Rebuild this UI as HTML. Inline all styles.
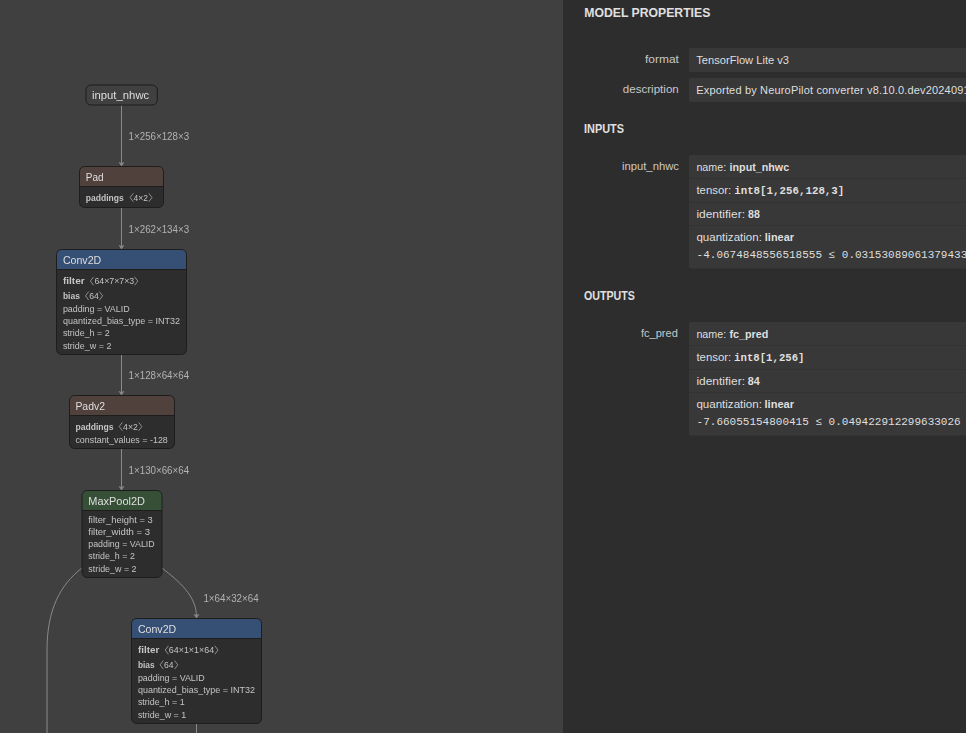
<!DOCTYPE html>
<html><head><meta charset="utf-8">
<style>
html,body{margin:0;padding:0;}
body{width:966px;height:733px;overflow:hidden;background:#404040;position:relative;font-family:"Liberation Sans",sans-serif;}
svg{position:absolute;left:0;top:0;}
svg.g{will-change:transform;}
.st{font-size:12px;font-weight:bold;fill:#e0e0e0;}
.sl{font-size:11px;fill:#c8c8c8;}
.sv{font-size:11px;fill:#dfdfdf;}
.nt{font-size:11px;fill:#dfdfdf;}
.at{font-size:9.5px;fill:#c4c4c4;}
.b{font-weight:bold;}
.el{font-size:10px;fill:#b2b2b2;}
.ep{stroke:#8a8a8a;stroke-width:1;fill:none;}
.ah{fill:#8a8a8a;stroke:#8a8a8a;stroke-width:0.7;stroke-linejoin:round;}
.br{fill:none;stroke:#b8b8b8;stroke-width:0.7;}
.mono{font-family:"Liberation Mono",monospace;}
</style></head>
<body>
<svg class="g" width="563" height="733" viewBox="0 0 563 733">
<path class="ep" d="M121.5 105.5 L121.5 164"/>
<path class="ah" d="M119.2 162.4 L121.5 166 L123.8 162.4 L121.5 163.6 Z"/>
<text class="el" x="128.6" y="140" textLength="60.5" lengthAdjust="spacingAndGlyphs">1×256×128×3</text>
<path class="ep" d="M121.5 208 L121.5 247"/>
<path class="ah" d="M119.2 245.4 L121.5 249 L123.8 245.4 L121.5 246.6 Z"/>
<text class="el" x="128.6" y="233" textLength="60.5" lengthAdjust="spacingAndGlyphs">1×262×134×3</text>
<path class="ep" d="M121.5 355 L121.5 393"/>
<path class="ah" d="M119.2 391.4 L121.5 395 L123.8 391.4 L121.5 392.6 Z"/>
<text class="el" x="128.6" y="379" textLength="60.5" lengthAdjust="spacingAndGlyphs">1×128×64×64</text>
<path class="ep" d="M121.5 449 L121.5 488"/>
<path class="ah" d="M119.2 486.4 L121.5 490 L123.8 486.4 L121.5 487.6 Z"/>
<text class="el" x="128.6" y="474" textLength="60.5" lengthAdjust="spacingAndGlyphs">1×130×66×64</text>
<path class="ep" d="M162 568 C180 582 196 596 196.5 616"/>
<path class="ah" d="M194.2 614.4 L196.5 618 L198.8 614.4 L196.5 615.6 Z"/>
<text class="el" x="203.4" y="602" textLength="55.2" lengthAdjust="spacingAndGlyphs">1×64×32×64</text>
<path class="ep" d="M82 568 C60 585 47 610 47 650 L47 740"/>
<path class="ep" d="M196.5 724 L196.5 740"/>
<rect x="86" y="85" width="71.3" height="20" rx="5" fill="#404040" stroke="#1d1d1d"/>
<text class="nt" x="92" y="99" textLength="57.2" lengthAdjust="spacingAndGlyphs">input_nhwc</text>
<path d="M84.5 166.5 H158.5 A5 5 0 0 1 163.5 171.5 V186.5 H79.5 V171.5 A5 5 0 0 1 84.5 166.5 Z" fill="#50413d"/>
<path d="M79.5 186.5 H163.5 V202.5 A5 5 0 0 1 158.5 207.5 H84.5 A5 5 0 0 1 79.5 202.5 Z" fill="#2d2d2d"/>
<line x1="79.5" y1="186.5" x2="163.5" y2="186.5" stroke="#1d1d1d" stroke-width="1"/>
<rect x="79.5" y="166.5" width="84.0" height="41.0" rx="5" fill="none" stroke="#1d1d1d"/>
<text class="nt" x="85.8" y="181" textLength="17.8" lengthAdjust="spacingAndGlyphs">Pad</text>
<text class="at b" x="85.8" y="200.5" textLength="37.9" lengthAdjust="spacingAndGlyphs">paddings</text>
<path class="br" d="M133.30 193.30 L130.10 197.55 L133.30 201.80"/>
<text class="at" x="133.6" y="200.5" textLength="14.4" lengthAdjust="spacingAndGlyphs">4×2</text>
<path class="br" d="M148.80 193.30 L152.00 197.55 L148.80 201.80"/>
<path d="M61.5 249.5 H181.5 A5 5 0 0 1 186.5 254.5 V269.5 H56.5 V254.5 A5 5 0 0 1 61.5 249.5 Z" fill="#364f74"/>
<path d="M56.5 269.5 H186.5 V349.5 A5 5 0 0 1 181.5 354.5 H61.5 A5 5 0 0 1 56.5 349.5 Z" fill="#2d2d2d"/>
<line x1="56.5" y1="269.5" x2="186.5" y2="269.5" stroke="#1d1d1d" stroke-width="1"/>
<rect x="56.5" y="249.5" width="130.0" height="105.0" rx="5" fill="none" stroke="#1d1d1d"/>
<text class="nt" x="62.9" y="264" textLength="38.3" lengthAdjust="spacingAndGlyphs">Conv2D</text>
<text class="at b" x="62.9" y="284" textLength="21.9" lengthAdjust="spacingAndGlyphs">filter</text>
<path class="br" d="M93.60 276.80 L90.40 281.05 L93.60 285.30"/>
<text class="at" x="94.4" y="284" textLength="39.8" lengthAdjust="spacingAndGlyphs">64×7×7×3</text>
<path class="br" d="M134.60 276.80 L137.80 281.05 L134.60 285.30"/>
<text class="at b" x="62.9" y="298.8" textLength="17.0" lengthAdjust="spacingAndGlyphs">bias</text>
<path class="br" d="M88.70 291.60 L85.50 295.85 L88.70 300.10"/>
<text class="at" x="89.2" y="298.8" textLength="9.6" lengthAdjust="spacingAndGlyphs">64</text>
<path class="br" d="M99.40 291.60 L102.60 295.85 L99.40 300.10"/>
<text class="at" x="62.9" y="312" textLength="66.7" lengthAdjust="spacingAndGlyphs">padding = VALID</text>
<text class="at" x="62.9" y="324" textLength="117.2" lengthAdjust="spacingAndGlyphs">quantized_bias_type = INT32</text>
<text class="at" x="62.9" y="336" textLength="46.8" lengthAdjust="spacingAndGlyphs">stride_h = 2</text>
<text class="at" x="62.9" y="348.5" textLength="48.6" lengthAdjust="spacingAndGlyphs">stride_w = 2</text>
<path d="M74.5 395.5 H169.5 A5 5 0 0 1 174.5 400.5 V415.5 H69.5 V400.5 A5 5 0 0 1 74.5 395.5 Z" fill="#50413d"/>
<path d="M69.5 415.5 H174.5 V443.5 A5 5 0 0 1 169.5 448.5 H74.5 A5 5 0 0 1 69.5 443.5 Z" fill="#2d2d2d"/>
<line x1="69.5" y1="415.5" x2="174.5" y2="415.5" stroke="#1d1d1d" stroke-width="1"/>
<rect x="69.5" y="395.5" width="105.0" height="53.0" rx="5" fill="none" stroke="#1d1d1d"/>
<text class="nt" x="75.4" y="410" textLength="29.6" lengthAdjust="spacingAndGlyphs">Padv2</text>
<text class="at b" x="75.4" y="429.5" textLength="38.2" lengthAdjust="spacingAndGlyphs">paddings</text>
<path class="br" d="M122.40 422.30 L119.20 426.55 L122.40 430.80"/>
<text class="at" x="123.1" y="429.5" textLength="14.7" lengthAdjust="spacingAndGlyphs">4×2</text>
<path class="br" d="M138.60 422.30 L141.80 426.55 L138.60 430.80"/>
<text class="at" x="75.4" y="443" textLength="92.4" lengthAdjust="spacingAndGlyphs">constant_values = -128</text>
<path d="M87 490.5 H157 A5 5 0 0 1 162 495.5 V510.5 H82 V495.5 A5 5 0 0 1 87 490.5 Z" fill="#365037"/>
<path d="M82 510.5 H162 V572.5 A5 5 0 0 1 157 577.5 H87 A5 5 0 0 1 82 572.5 Z" fill="#2d2d2d"/>
<line x1="82" y1="510.5" x2="162" y2="510.5" stroke="#1d1d1d" stroke-width="1"/>
<rect x="82" y="490.5" width="80" height="87.0" rx="5" fill="none" stroke="#1d1d1d"/>
<text class="nt" x="88.25" y="505" textLength="56.7" lengthAdjust="spacingAndGlyphs">MaxPool2D</text>
<text class="at" x="88.25" y="523" textLength="64.5" lengthAdjust="spacingAndGlyphs">filter_height = 3</text>
<text class="at" x="88.25" y="535" textLength="61.8" lengthAdjust="spacingAndGlyphs">filter_width = 3</text>
<text class="at" x="88.25" y="547" textLength="66.4" lengthAdjust="spacingAndGlyphs">padding = VALID</text>
<text class="at" x="88.25" y="559" textLength="46.6" lengthAdjust="spacingAndGlyphs">stride_h = 2</text>
<text class="at" x="88.25" y="571.5" textLength="48.3" lengthAdjust="spacingAndGlyphs">stride_w = 2</text>
<path d="M136.5 618.5 H256.5 A5 5 0 0 1 261.5 623.5 V638.5 H131.5 V623.5 A5 5 0 0 1 136.5 618.5 Z" fill="#364f74"/>
<path d="M131.5 638.5 H261.5 V718.5 A5 5 0 0 1 256.5 723.5 H136.5 A5 5 0 0 1 131.5 718.5 Z" fill="#2d2d2d"/>
<line x1="131.5" y1="638.5" x2="261.5" y2="638.5" stroke="#1d1d1d" stroke-width="1"/>
<rect x="131.5" y="618.5" width="130.0" height="105.0" rx="5" fill="none" stroke="#1d1d1d"/>
<text class="nt" x="137.9" y="633" textLength="38.3" lengthAdjust="spacingAndGlyphs">Conv2D</text>
<text class="at b" x="137.9" y="653" textLength="21.4" lengthAdjust="spacingAndGlyphs">filter</text>
<path class="br" d="M168.40 645.80 L165.20 650.05 L168.40 654.30"/>
<text class="at" x="168.8" y="653" textLength="45.3" lengthAdjust="spacingAndGlyphs">64×1×1×64</text>
<path class="br" d="M214.80 645.80 L218.00 650.05 L214.80 654.30"/>
<text class="at b" x="137.9" y="667.8" textLength="16.7" lengthAdjust="spacingAndGlyphs">bias</text>
<path class="br" d="M163.30 660.60 L160.10 664.85 L163.30 669.10"/>
<text class="at" x="164.0" y="667.8" textLength="9.5" lengthAdjust="spacingAndGlyphs">64</text>
<path class="br" d="M174.60 660.60 L177.80 664.85 L174.60 669.10"/>
<text class="at" x="137.9" y="681" textLength="66.8" lengthAdjust="spacingAndGlyphs">padding = VALID</text>
<text class="at" x="137.9" y="693" textLength="117.1" lengthAdjust="spacingAndGlyphs">quantized_bias_type = INT32</text>
<text class="at" x="137.9" y="705" textLength="46.7" lengthAdjust="spacingAndGlyphs">stride_h = 1</text>
<text class="at" x="137.9" y="717.5" textLength="48.4" lengthAdjust="spacingAndGlyphs">stride_w = 1</text>
</svg>
<svg class="s" width="966" height="733" viewBox="0 0 966 733">
<rect x="563" y="0" width="403" height="733" fill="#2d2d2d"/>
<text class="st" x="584.3" y="17" textLength="126.0" lengthAdjust="spacingAndGlyphs">MODEL PROPERTIES</text>
<text class="sl" x="645.0" y="63" textLength="33.9" lengthAdjust="spacingAndGlyphs">format</text>
<rect x="689" y="48" width="300" height="24" rx="2" fill="#383838"/>
<text class="sv" x="696.3" y="64" textLength="92.7" lengthAdjust="spacingAndGlyphs">TensorFlow Lite v3</text>
<text class="sl" x="622.8" y="93" textLength="56.0" lengthAdjust="spacingAndGlyphs">description</text>
<rect x="689" y="78" width="300" height="24" rx="2" fill="#383838"/>
<text class="sv" x="696.3" y="93.5" letter-spacing="0.17">Exported by NeuroPilot converter v8.10.0.dev20240912</text>
<text class="st" x="584.1" y="133" textLength="39.9" lengthAdjust="spacingAndGlyphs">INPUTS</text>
<text class="sl" x="621.9" y="170" textLength="57.1" lengthAdjust="spacingAndGlyphs">input_nhwc</text>
<rect x="689" y="155" width="300" height="113.5" rx="2" fill="#383838"/>
<rect x="689" y="178" width="300" height="1" fill="#323232"/>
<rect x="689" y="202" width="300" height="1" fill="#323232"/>
<rect x="689" y="225" width="300" height="1" fill="#323232"/>
<text class="sv" x="696.4" y="171" textLength="29.8" lengthAdjust="spacingAndGlyphs">name:</text>
<text class="sv b" x="729.6" y="171" textLength="59.5" lengthAdjust="spacingAndGlyphs">input_nhwc</text>
<text class="sv" x="696.4" y="194" textLength="34.8" lengthAdjust="spacingAndGlyphs">tensor:</text>
<text class="sv b mono" x="734.2" y="194" textLength="110.1" lengthAdjust="spacingAndGlyphs">int8[1,256,128,3]</text>
<text class="sv" x="696.4" y="218" textLength="48.6" lengthAdjust="spacingAndGlyphs">identifier:</text>
<text class="sv b" x="748.1" y="218" textLength="11.8" lengthAdjust="spacingAndGlyphs">88</text>
<text class="sv" x="696.4" y="240.8" textLength="65.5" lengthAdjust="spacingAndGlyphs">quantization:</text>
<text class="sv b" x="764.8" y="240.8" textLength="29.2" lengthAdjust="spacingAndGlyphs">linear</text>
<text class="sv mono" x="696.6" y="258">-4.0674848556518555 ≤ 0.03153089061379433</text>
<text class="st" x="584.0" y="299.6" textLength="50.9" lengthAdjust="spacingAndGlyphs">OUTPUTS</text>
<text class="sl" x="641.0" y="336.7" textLength="36.8" lengthAdjust="spacingAndGlyphs">fc_pred</text>
<rect x="689" y="322" width="300" height="113.5" rx="2" fill="#383838"/>
<rect x="689" y="345" width="300" height="1" fill="#323232"/>
<rect x="689" y="369" width="300" height="1" fill="#323232"/>
<rect x="689" y="392" width="300" height="1" fill="#323232"/>
<text class="sv" x="696.4" y="337.7" textLength="29.8" lengthAdjust="spacingAndGlyphs">name:</text>
<text class="sv b" x="729.5" y="337.7" textLength="38.8" lengthAdjust="spacingAndGlyphs">fc_pred</text>
<text class="sv" x="696.4" y="361" textLength="34.8" lengthAdjust="spacingAndGlyphs">tensor:</text>
<text class="sv b mono" x="734.1" y="361" textLength="70.4" lengthAdjust="spacingAndGlyphs">int8[1,256]</text>
<text class="sv" x="696.4" y="385" textLength="48.6" lengthAdjust="spacingAndGlyphs">identifier:</text>
<text class="sv b" x="747.8" y="385" textLength="12.0" lengthAdjust="spacingAndGlyphs">84</text>
<text class="sv" x="696.4" y="408" textLength="65.5" lengthAdjust="spacingAndGlyphs">quantization:</text>
<text class="sv b" x="764.5" y="408" textLength="29.6" lengthAdjust="spacingAndGlyphs">linear</text>
<text class="sv mono" x="696.6" y="425">-7.66055154800415 ≤ 0.049422912299633026</text>
</svg>
</body></html>
